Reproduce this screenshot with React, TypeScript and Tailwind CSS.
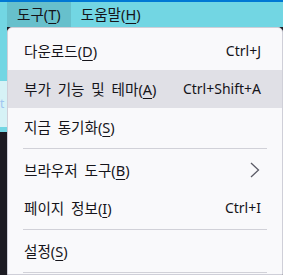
import React from "react";

const font = { fontFamily: '"Noto Sans", "Noto Sans CJK KR", sans-serif' };

function M({ c }: { c: string }) {
  return <span className="underline decoration-1 underline-offset-[3px]">{c}</span>;
}

function Row({
  label,
  m,
  right,
  active,
  chevron,
}: {
  label: string;
  m: string;
  right?: string;
  active?: boolean;
  chevron?: boolean;
}) {
  return (
    <div
      className={`h-[38px] flex items-center justify-between pl-[16px] pr-[21px] text-[14px] leading-none text-[#15141a] ${
        active ? "bg-[#e0e0e6]" : ""
      }`}
    >
      <span className="text-[14.6px] [word-spacing:3px]">
        {label}(<M c={m} />)
      </span>
      {right && <span>{right}</span>}
      {chevron && (
        <svg width="10" height="16" viewBox="0 0 10 16" className="mr-[1px]">
          <polyline points="1,1 8.5,8 1,15" fill="none" stroke="#5b5b66" strokeWidth="1.3" />
        </svg>
      )}
    </div>
  );
}

function Sep() {
  return <div className="my-[2px] h-px mx-[15px] bg-[#d1d1d8]" />;
}

export default function App() {
  return (
    <div className="w-[283px] h-[275px] overflow-hidden bg-[#1c1b22] flex flex-col" style={font}>
      <div className="h-[2px] bg-[#0078d4] shrink-0" />
      <div className="h-[25px] bg-[#72d6e3] flex pl-[7px] text-[14.6px] leading-none text-[#15141a] shrink-0">
        <div className="h-full flex items-center pl-[10px] pr-[10px] bg-[#67c0cc]">
          도구(<M c="T" />)
        </div>
        <div className="h-full flex items-center px-[10px]">
          도움말(<M c="H" />)
        </div>
      </div>
      <div className="flex flex-1 min-h-0">
        <div className="w-[7px] flex flex-col shrink-0">
          <div className="h-[54px] bg-[#72d6e3]" />
          <div className="h-[46px] bg-[#d6f2f6] text-[#9fc6f0] text-[12px] leading-none overflow-hidden flex items-center">
            t
          </div>
          <div className="h-[5px] bg-[#72d6e3]" />
          <div className="flex-1 bg-[#1c1b22]" />
        </div>
        <div className="w-[276px] bg-[#f9f9fb] border border-[#cfcfd8] rounded-t-[5px] pt-[4px]">
          <Row label="다운로드" m="D" right="Ctrl+J" />
          <Row label="부가 기능 및 테마" m="A" right="Ctrl+Shift+A" active />
          <Row label="지금 동기화" m="S" />
          <Sep />
          <Row label="브라우저 도구" m="B" chevron />
          <Row label="페이지 정보" m="I" right="Ctrl+I" />
          <Sep />
          <Row label="설정" m="S" />
          <Sep />
        </div>
      </div>
    </div>
  );
}
